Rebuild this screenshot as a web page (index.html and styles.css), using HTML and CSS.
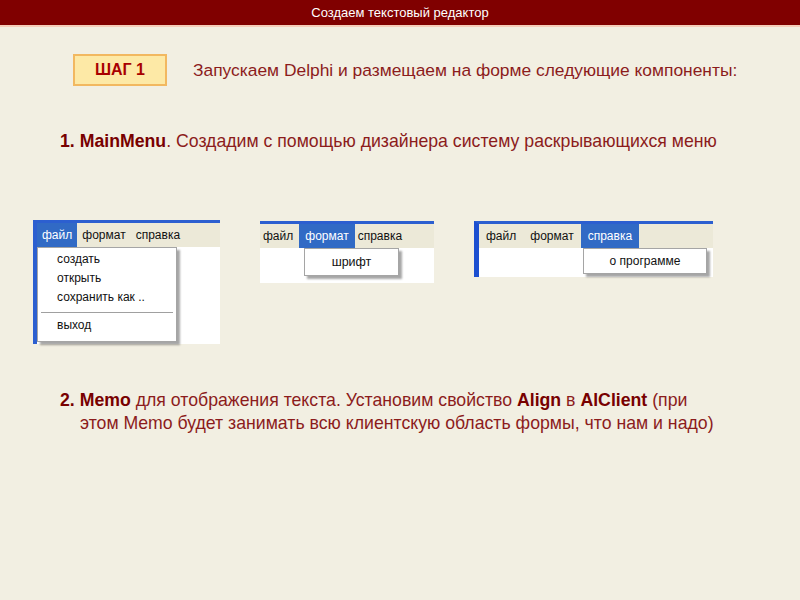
FILE: index.html
```html
<!DOCTYPE html>
<html lang="ru">
<head>
  <meta charset="UTF-8" />
  <title>Создаем текстовый редактор</title>
  <link rel="stylesheet" href="styles.css">
</head>
<body>

  <div class="title">Создаем текстовый редактор</div>

  <div class="slide">
    <div class="step">
      <div class="step-box">ШАГ 1</div>
      <div class="step-text">Запускаем Delphi и размещаем на форме следующие компоненты:</div>
    </div>

    <p class="item item1"><b>1. MainMenu</b>. Создадим с помощью дизайнера систему раскрывающихся меню</p>

    <div class="shots">
      <!-- файл -->
      <div class="shot shot1">
        <div class="menubar">
          <span class="mi active">файл</span>
          <span class="mi">формат</span>
          <span class="mi">справка</span>
        </div>
        <div class="client"></div>
        <div class="dropdown dd1">
          <div class="ddi">создать</div>
          <div class="ddi">открыть</div>
          <div class="ddi">сохранить как ..</div>
          <div class="sep"></div>
          <div class="ddi">выход</div>
        </div>
      </div>

      <!-- формат -->
      <div class="shot shot2">
        <div class="menubar">
          <span class="mi">файл</span>
          <span class="mi active">формат</span>
          <span class="mi">справка</span>
        </div>
        <div class="client"></div>
        <div class="dropdown dd2">
          <div class="ddi">шрифт</div>
        </div>
      </div>

      <!-- справка -->
      <div class="shot shot3">
        <div class="menubar">
          <span class="mi">файл</span>
          <span class="mi">формат</span>
          <span class="mi active">справка</span>
        </div>
        <div class="client"></div>
        <div class="dropdown dd3">
          <div class="ddi">о программе</div>
        </div>
      </div>
    </div>

    <p class="item item2"><b>2. Memo</b> для отображения текста. Установим свойство <b>Align</b> в <b>AlClient</b> (при<br><span class="indent">этом Memo будет занимать всю клиентскую область формы, что нам и надо)</span></p>
  </div>

</body>
</html>
```

FILE: styles.css
```css
body {
  margin: 0;
  background-color: #f2efe2;
  font-family: 'Liberation Sans', Arial, sans-serif;
  color: #8c1c1c;
  width: 800px;
  height: 600px;
  overflow: hidden;
}

.title {
  background-color: #800000;
  color: #fff;
  font-size: 13px;
  height: 25px;
  line-height: 25px;
  text-align: center;
  border-bottom: 2px solid #f6cdb9;
}

.slide {
  padding-top: 27px;
}

.step {
  display: flex;
  align-items: center;
  padding-left: 73px;
}

.step-box {
  width: 90px;
  height: 28px;
  line-height: 28px;
  text-align: center;
  background-color: #fde9a6;
  border: 2px solid #f2b860;
  color: #a80000;
  font-weight: bold;
  font-size: 16px;
}

.step-text {
  margin-left: 26px;
  font-size: 17.4px;
}

.item {
  margin: 0;
  font-size: 17.7px;
  line-height: 23px;
}

.item b {
  color: #780000;
}

.item1 {
  padding-left: 60px;
  margin-top: 44px;
}

.item2 {
  padding-left: 60px;
  margin-top: 45px;
}

.indent {
  padding-left: 20px;
}

/* menu screenshots */
.shots {
  display: flex;
  align-items: flex-start;
  gap: 40px;
  padding-left: 33px;
  margin-top: 67px;
}

.shot {
  position: relative;
  background-color: #fff;
  border-top: 3px solid #2c5fd0;
  font-size: 12px;
  color: #111;
}

.shot1 {
  width: 183px;
  border-left: 4px solid #2c5fd0;
}

.shot2 {
  width: 174px;
  margin-top: 1px;
}

.shot3 {
  width: 234px;
  margin-top: 1px;
  border-left: 5px solid #1c4fd0;
}

.menubar {
  display: flex;
  background-color: #ece9d8;
  height: 24px;
  align-items: stretch;
}

.mi {
  display: flex;
  align-items: center;
  padding: 0 5px;
}

.mi.active {
  background-color: #316ac5;
  color: #fff;
}

.shot1 .client { height: 97px; }
.shot2 .client { height: 35px; }
.shot3 .client { height: 29px; }

.shot2 .mi { padding: 0 6px 0 3px; }
.shot2 .mi.active { padding: 0 6px; }
.shot3 .mi { padding: 0 7px; }

.dropdown {
  position: absolute;
  top: 24px;
  background-color: #fff;
  border: 1px solid #a5a5a5;
  box-shadow: 3px 3px 2px rgba(0, 0, 0, 0.35);
}

.dd1 {
  left: 0;
  width: 138px;
  padding: 2px 0 6px;
}

.dd2 {
  left: 44px;
  width: 93px;
  height: 26px;
  text-align: center;
  line-height: 26px;
  font-size: 12.5px;
}

.dd3 {
  left: 104px;
  width: 122px;
  height: 24px;
  text-align: center;
  line-height: 24px;
}

.dd1 .ddi {
  padding-left: 19px;
  height: 19px;
  line-height: 19px;
}

.sep {
  border-top: 1px solid #a0a0a0;
  margin: 5px 3px 3px 3px;
}
```
